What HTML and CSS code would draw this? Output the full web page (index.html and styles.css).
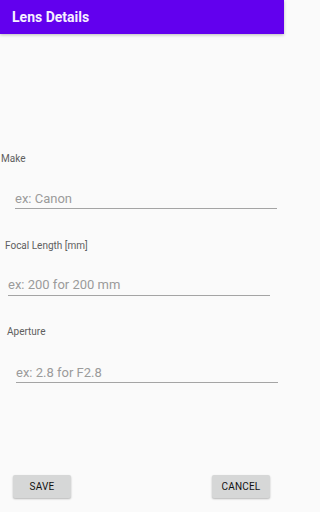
FILE: index.html
```html
<!DOCTYPE html>
<html lang="en">
<head>
<meta charset="utf-8">
<title>Lens Details</title>
<link rel="stylesheet" href="styles.css">
</head>
<body>
<div class="screen">
  <header class="appbar"><h1 class="title">Lens Details</h1></header>
  <main class="form">
    <label class="label label-make">Make</label>
    <input class="field field-make" type="text" placeholder="ex: Canon">
    <label class="label label-focal">Focal Length [mm]</label>
    <input class="field field-focal" type="text" placeholder="ex: 200 for 200 mm">
    <label class="label label-aperture">Aperture</label>
    <input class="field field-aperture" type="text" placeholder="ex: 2.8 for F2.8">
  </main>
  <footer class="actions">
    <button class="btn">SAVE</button>
    <button class="btn">CANCEL</button>
  </footer>
</div>
</body>
</html>
```
FILE: styles.css
```css
* { box-sizing: border-box; }
html, body { margin: 0; padding: 0; }
body {
  background: #fafafa;
  font-family: Roboto, "Liberation Sans", sans-serif;
}
.screen {
  width: 100%;
  max-width: 284px;
  height: 512px;
  display: flex;
  flex-direction: column;
  background: #fafafa;
}
.appbar {
  height: 34px;
  flex: none;
  background: #6200ee;
  box-shadow: 0 1px 3px rgba(0,0,0,0.25);
  display: flex;
  align-items: center;
  padding-left: 12px;
}
.title {
  margin: 0;
  font-size: 14px;
  font-weight: 700;
  color: #f6f0ff;
  line-height: 16px;
  padding-bottom: 1px;
}
.form {
  display: flex;
  flex-direction: column;
  align-items: flex-start;
}
.label {
  display: block;
  font-size: 10px;
  line-height: 12px;
  color: #5e5e5e;
}
.label-make { margin: 119px 0 0 1px; }
.label-focal { margin: 31px 0 0 5px; }
.label-aperture { margin: 30px 0 0 7px; }
.field {
  display: block;
  width: 262px;
  height: 19px;
  padding: 0 0 2px 0;
  border: none;
  border-bottom: 1px solid #a4a4a4;
  background: transparent;
  font-family: Roboto, "Liberation Sans", sans-serif;
  font-size: 13px;
  line-height: 16px;
  color: #222;
  outline: none;
}
.field::placeholder { color: #9b9b9b; opacity: 1; }
.field-make { margin: 25px 0 0 15px; }
.field-focal { margin: 24px 0 0 8px; height: 20px; padding-bottom: 3px; }
.field-aperture { margin: 26px 0 0 16px; }
.actions {
  margin-top: auto;
  display: flex;
  justify-content: space-between;
  padding: 0 14px 14px 13px;
}
.btn {
  width: 58px;
  height: 23px;
  border: none;
  border-radius: 2px;
  background: #d6d7d7;
  box-shadow: 0 1px 2px rgba(0,0,0,0.28);
  font-family: Roboto, "Liberation Sans", sans-serif;
  font-size: 10px;
  font-weight: 400;
  color: #111;
  padding: 0;
  letter-spacing: 0.2px;
}
```
